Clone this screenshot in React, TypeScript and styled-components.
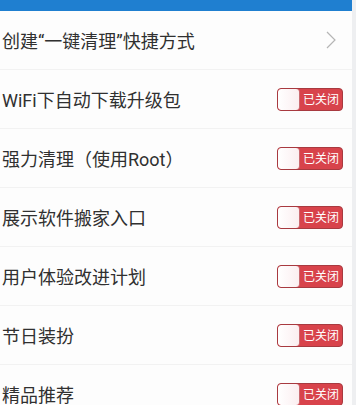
import styled, { createGlobalStyle } from "styled-components";

const GlobalStyle = createGlobalStyle`
  html, body {
    margin: 0;
    padding: 0;
    background: #eeeff1;
  }
  body {
    font-family: Roboto, "Noto Sans CJK SC", sans-serif;
  }
`;

const Page = styled.div`
  width: 352px;
  min-height: 405px;
  background: #fdfdfd;
  overflow: hidden;
`;

const TopBar = styled.div`
  height: 11px;
  background: #1f7fd0;
`;

const List = styled.ul`
  list-style: none;
  margin: 0;
  padding: 0;
`;

const Row = styled.li`
  height: 59px;
  display: flex;
  align-items: center;
  justify-content: space-between;
  padding: 0 9px 0 2px;
  border-bottom: 1px solid #f2f2f2;
  box-sizing: border-box;
`;

const Label = styled.span`
  font-size: 18px;
  color: #303030;
`;

const Chevron = styled.svg`
  width: 12px;
  height: 18px;
  margin-right: 6px;
`;

const Toggle = styled.div`
  width: 66px;
  height: 23px;
  box-sizing: border-box;
  border: 1px solid #a83a40;
  border-radius: 4px;
  background: #d8434b;
  display: flex;
  align-items: center;
  overflow: hidden;
`;

const Thumb = styled.div`
  width: 21px;
  height: 100%;
  border-radius: 3px;
  background: linear-gradient(90deg, #ffffff 0%, #fbeef0 100%);
  box-shadow: 1px 0 0 #c96b71;
`;

const State = styled.span`
  flex: 1;
  text-align: center;
  color: #ffffff;
  font-family: "Noto Sans CJK SC", sans-serif;
  font-size: 12px;
  line-height: 1;
  padding-left: 1px;
`;

const items: { label: string; arrow?: boolean }[] = [
  { label: "创建“一键清理”快捷方式", arrow: true },
  { label: "WiFi下自动下载升级包" },
  { label: "强力清理（使用Root）" },
  { label: "展示软件搬家入口" },
  { label: "用户体验改进计划" },
  { label: "节日装扮" },
  { label: "精品推荐" },
];

export default function App() {
  return (
    <>
      <GlobalStyle />
      <Page>
        <TopBar />
        <List>
          {items.map((it) => (
            <Row key={it.label}>
              <Label>{it.label}</Label>
              {it.arrow ? (
                <Chevron viewBox="0 0 12 18">
                  <path d="M2 1 L10 9 L2 17" fill="none" stroke="#b5b5b5" strokeWidth="1.2" />
                </Chevron>
              ) : (
                <Toggle>
                  <Thumb />
                  <State>已关闭</State>
                </Toggle>
              )}
            </Row>
          ))}
        </List>
      </Page>
    </>
  );
}
